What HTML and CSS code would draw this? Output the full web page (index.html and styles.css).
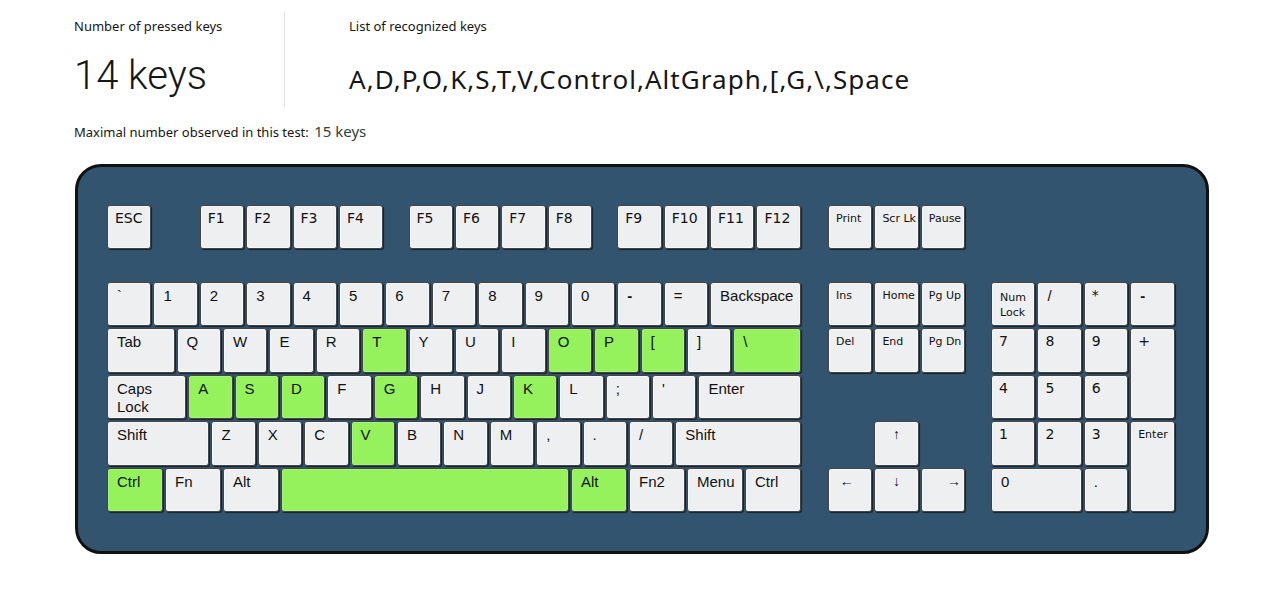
FILE: index.html
```html
<!DOCTYPE html>
<html lang="en">
<head>
<meta charset="utf-8">
<title>Keyboard rollover test</title>
<link rel="stylesheet" href="styles.css">
</head>
<body>
<div class="page">
  <div class="stats">
    <div class="stat stat-count">
      <div class="stat-label">Number of pressed keys</div>
      <div class="stat-value">14 keys</div>
    </div>
    <div class="stat stat-list">
      <div class="stat-label">List of recognized keys</div>
      <div class="stat-keys">A,D,P,O,K,S,T,V,Control,AltGraph,[,G,\,Space</div>
    </div>
  </div>
  <p class="max">Maximal number observed in this test: <span class="max-value">15 keys</span></p>

  <div class="keyboard">
    <div class="section section-fn">
      <div class="block-main row">
        <div class="key alt">ESC</div>
        <div class="spacer w1"></div>
        <div class="key alt">F1</div>
        <div class="key alt">F2</div>
        <div class="key alt">F3</div>
        <div class="key alt">F4</div>
        <div class="spacer w05"></div>
        <div class="key alt">F5</div>
        <div class="key alt">F6</div>
        <div class="key alt">F7</div>
        <div class="key alt">F8</div>
        <div class="spacer w05"></div>
        <div class="key alt">F9</div>
        <div class="key alt">F10</div>
        <div class="key alt">F11</div>
        <div class="key alt">F12</div>
      </div>
      <div class="block-nav row">
        <div class="key alt small">Print</div>
        <div class="key alt small">Scr Lk</div>
        <div class="key alt small">Pause</div>
      </div>
      <div class="block-num"></div>
    </div>

    <div class="section section-main">
      <div class="block-main">
        <div class="row">
          <div class="key">`</div>
          <div class="key">1</div>
          <div class="key">2</div>
          <div class="key">3</div>
          <div class="key">4</div>
          <div class="key">5</div>
          <div class="key">6</div>
          <div class="key">7</div>
          <div class="key">8</div>
          <div class="key">9</div>
          <div class="key">0</div>
          <div class="key"><b>-</b></div>
          <div class="key">=</div>
          <div class="key w2">Backspace</div>
        </div>
        <div class="row">
          <div class="key w15">Tab</div>
          <div class="key">Q</div>
          <div class="key">W</div>
          <div class="key">E</div>
          <div class="key">R</div>
          <div class="key on">T</div>
          <div class="key">Y</div>
          <div class="key">U</div>
          <div class="key">I</div>
          <div class="key on">O</div>
          <div class="key on">P</div>
          <div class="key on">[</div>
          <div class="key">]</div>
          <div class="key w15 on">\</div>
        </div>
        <div class="row">
          <div class="key w175 two">Caps<br>Lock</div>
          <div class="key on">A</div>
          <div class="key on">S</div>
          <div class="key on">D</div>
          <div class="key">F</div>
          <div class="key on">G</div>
          <div class="key">H</div>
          <div class="key">J</div>
          <div class="key on">K</div>
          <div class="key">L</div>
          <div class="key">;</div>
          <div class="key">'</div>
          <div class="key w225">Enter</div>
        </div>
        <div class="row">
          <div class="key w225">Shift</div>
          <div class="key">Z</div>
          <div class="key">X</div>
          <div class="key">C</div>
          <div class="key on">V</div>
          <div class="key">B</div>
          <div class="key">N</div>
          <div class="key">M</div>
          <div class="key">,</div>
          <div class="key">.</div>
          <div class="key">/</div>
          <div class="key w275">Shift</div>
        </div>
        <div class="row">
          <div class="key w125 on">Ctrl</div>
          <div class="key w125">Fn</div>
          <div class="key w125">Alt</div>
          <div class="key w625 on"></div>
          <div class="key w125 on">Alt</div>
          <div class="key w125">Fn2</div>
          <div class="key w125">Menu</div>
          <div class="key w125">Ctrl</div>
        </div>
      </div>

      <div class="block-nav grid-nav">
        <div class="key alt small">Ins</div>
        <div class="key alt small">Home</div>
        <div class="key alt small">Pg Up</div>
        <div class="key alt small">Del</div>
        <div class="key alt small">End</div>
        <div class="key alt small">Pg Dn</div>
        <div class="key arrow arrow-up">&#8593;</div>
        <div class="key arrow arrow-left">&#8592;</div>
        <div class="key arrow arrow-down">&#8595;</div>
        <div class="key arrow arrow-right">&#8594;</div>
      </div>

      <div class="block-num grid-num">
        <div class="key alt small two-small">Num<br>Lock</div>
        <div class="key">/</div>
        <div class="key alt">*</div>
        <div class="key"><b>-</b></div>
        <div class="key alt">7</div>
        <div class="key alt">8</div>
        <div class="key alt">9</div>
        <div class="key alt num-plus">+</div>
        <div class="key alt">4</div>
        <div class="key alt">5</div>
        <div class="key alt">6</div>
        <div class="key alt">1</div>
        <div class="key alt">2</div>
        <div class="key alt">3</div>
        <div class="key alt small num-enter">Enter</div>
        <div class="key num-zero">0</div>
        <div class="key num-dot">.</div>
      </div>
    </div>
  </div>
</div>
</body>
</html>
```
FILE: styles.css
```css
* { box-sizing: border-box; }

html, body {
  margin: 0;
  padding: 0;
  background: #ffffff;
}

body {
  font-family: "Noto Sans", Roboto, "Liberation Sans", sans-serif;
  color: #161616;
}

.page {
  padding: 12px 0 0 74px;
}

.stats {
  display: flex;
  height: 95px;
}

.stat-count {
  width: 211px;
  border-right: 1px solid #e0e0e0;
}

.stat-list {
  padding-left: 64px;
}

.stat-label {
  padding-top: 4px;
  font-size: 13px;
  line-height: 20px;
}

.stat-value {
  margin-top: 16px;
  font-family: Roboto, "Noto Sans", sans-serif;
  font-size: 40px;
  font-weight: 300;
  line-height: 48px;
}

.stat-keys {
  margin-top: 26px;
  font-size: 26px;
  font-weight: 400;
  line-height: 34px;
  letter-spacing: 1.05px;
}

.max {
  margin: 14px 0 0;
  font-size: 13px;
  line-height: 20px;
}

.max-value {
  margin-left: 2px;
  font-size: 15px;
  color: #2f4236;
}

/* keyboard */
.keyboard {
  --u: 46.4px;
  margin: 22px 0 0 1px;
  width: 1134px;
  height: 390px;
  padding: 37px 0 0 28px;
  background: #33546f;
  border: 3px solid #111111;
  border-radius: 26px;
}

.section {
  display: flex;
}

.section-fn {
  height: var(--u);
  margin-bottom: 30.6px;
}

.block-main {
  width: calc(var(--u) * 15);
  flex: none;
}

.block-nav {
  width: calc(var(--u) * 3);
  margin-left: 25px;
  flex: none;
}

.block-num {
  width: calc(var(--u) * 4);
  margin-left: 23.8px;
  flex: none;
}

.row {
  display: flex;
  height: var(--u);
}

.spacer { flex: none; }
.spacer.w1 { width: var(--u); }
.spacer.w05 { width: calc(var(--u) * 0.5); }

.key {
  flex: none;
  width: calc(var(--u) - 2px);
  height: calc(var(--u) - 2px);
  margin: 1px;
  padding: 5px 9px 0;
  background: #eeeff0;
  border: 1px solid #444444;
  border-radius: 3px;
  box-shadow: 1px 1px 1px rgba(0, 0, 0, 0.6), inset 0 0 0 1px #f6f7f8;
  font-family: "Liberation Sans", Arial, sans-serif;
  font-size: 15px;
  line-height: 16px;
  color: #111111;
  white-space: nowrap;
  overflow: hidden;
}

.key.on {
  background: #95f25c;
  box-shadow: 1px 1px 1px rgba(0, 0, 0, 0.6), inset 0 0 0 1px #a5f574;
}

.key.alt {
  font-family: "DejaVu Sans", Verdana, sans-serif;
  font-size: 14px;
  padding-left: 7px;
  padding-top: 4px;
}

.key.small {
  font-size: 11px;
  padding-left: 7px;
  padding-top: 5px;
}

.key.two {
  line-height: 18px;
  padding-top: 4px;
}

.key.two-small {
  line-height: 15px;
  padding-top: 7px;
  padding-left: 8px;
}

.key.w125 { width: calc(var(--u) * 1.25 - 2px); }
.key.w15 { width: calc(var(--u) * 1.5 - 2px); }
.key.w175 { width: calc(var(--u) * 1.75 - 2px); }
.key.w2 { width: calc(var(--u) * 2 - 2px); }
.key.w225 { width: calc(var(--u) * 2.25 - 2px); }
.key.w275 { width: calc(var(--u) * 2.75 - 2px); }
.key.w625 { width: calc(var(--u) * 6.25 - 2px); }

.key b { font-weight: 700; }

/* grids */
.grid-nav,
.grid-num {
  display: grid;
  grid-template-columns: repeat(3, var(--u));
  grid-template-rows: repeat(5, var(--u));
}

.grid-num {
  grid-template-columns: repeat(4, var(--u));
}

.grid-nav .key,
.grid-num .key {
  width: auto;
  height: auto;
}

.arrow {
  font-size: 14px;
  padding: 4px 0 0;
  text-align: center;
}

.arrow-up { grid-column: 2; grid-row: 4; }
.arrow-left { grid-column: 1; grid-row: 5; padding-right: 7px; }
.arrow-down { grid-column: 2; grid-row: 5; }
.arrow-right { grid-column: 3; grid-row: 5; padding-left: 22px; }

.num-plus { grid-column: 4; grid-row: 2 / span 2; }
.num-enter { grid-column: 4; grid-row: 4 / span 2; }
.num-zero { grid-column: 1 / span 2; grid-row: 5; }
.num-dot { grid-column: 3; grid-row: 5; }
```
